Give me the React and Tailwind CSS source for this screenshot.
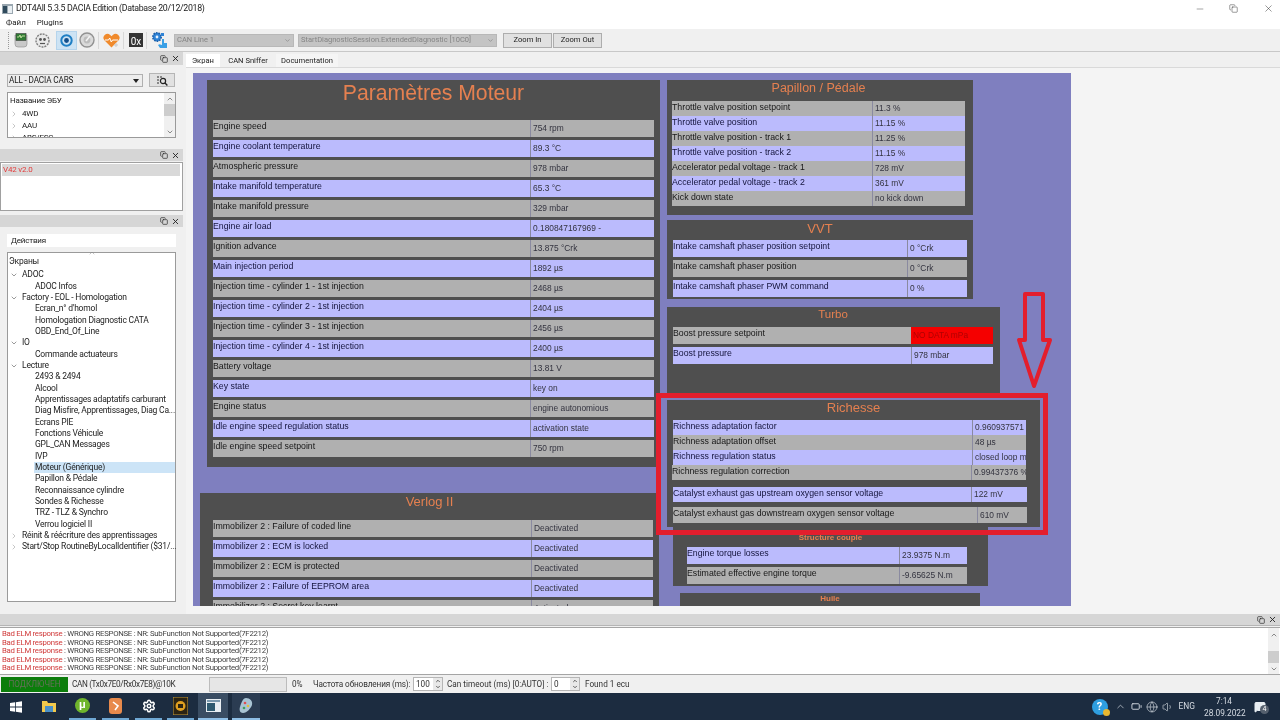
import React from "react";
import { Minus, X, ChevronUp, ChevronDown, ChevronRight, Battery, Globe, Volume1, MessageSquare, Settings, Copy } from "lucide-react";

const UI = "[font-family:'Roboto',sans-serif]";

function Row({ label, value, tone, h = "h-[17px]", valueW = "w-[124px]", mb = "mb-[3px]", valueClass = "" }) {
  const bg = tone === "p" ? "bg-[#bbbbfd] text-[#14143c]" : "bg-[#b0b0b0] text-[#161616]";
  return (
    <div className={`flex ${h} ${mb} ${bg} shrink-0 overflow-hidden`}>
      <div className="flex-1 min-w-0 whitespace-nowrap leading-[12px]">{label}</div>
      <div className={`${valueW} shrink-0 border-l border-[#8a8aa0] pl-[2px] flex items-center whitespace-nowrap overflow-hidden text-[8.4px] text-[#33333f] ${valueClass}`}>{value}</div>
    </div>
  );
}

const mainRows = [
  ["Engine speed", "754 rpm"],
  ["Engine coolant temperature", "89.3 °C"],
  ["Atmospheric pressure", "978 mbar"],
  ["Intake manifold temperature", "65.3 °C"],
  ["Intake manifold pressure", "329 mbar"],
  ["Engine air load", "0.180847167969 -"],
  ["Ignition advance", "13.875 °Crk"],
  ["Main injection period", "1892 µs"],
  ["Injection time - cylinder 1 - 1st injection", "2468 µs"],
  ["Injection time - cylinder 2 - 1st injection", "2404 µs"],
  ["Injection time - cylinder 3 - 1st injection", "2456 µs"],
  ["Injection time - cylinder 4 - 1st injection", "2400 µs"],
  ["Battery voltage", "13.81 V"],
  ["Key state", "key on"],
  ["Engine status", "engine autonomious"],
  ["Idle engine speed regulation status", "activation state"],
  ["Idle engine speed setpoint", "750 rpm"],
];
const verlogRows = [
  ["Immobilizer 2 : Failure of coded line", "Deactivated"],
  ["Immobilizer 2 : ECM is locked", "Deactivated"],
  ["Immobilizer 2 : ECM is protected", "Deactivated"],
  ["Immobilizer 2 : Failure of EEPROM area", "Deactivated"],
  ["Immobilizer 2 : Secret key learnt", "Activated"],
];
const papillonRows = [
  ["Throttle valve position setpoint", "11.3 %"],
  ["Throttle valve position", "11.15 %"],
  ["Throttle valve position - track 1", "11.25 %"],
  ["Throttle valve position - track 2", "11.15 %"],
  ["Accelerator pedal voltage - track 1", "728 mV"],
  ["Accelerator pedal voltage - track 2", "361 mV"],
  ["Kick down state", "no kick down"],
];

const treeRows = [
  [0, "Экраны"],
  [1, "ADOC", "open"],
  [2, "ADOC Infos"],
  [1, "Factory - EOL - Homologation", "open"],
  [2, "Ecran_n° d'homol"],
  [2, "Homologation Diagnostic CATA"],
  [2, "OBD_End_Of_Line"],
  [1, "IO", "open"],
  [2, "Commande actuateurs"],
  [1, "Lecture", "open"],
  [2, "2493 & 2494"],
  [2, "Alcool"],
  [2, "Apprentissages adaptatifs carburant"],
  [2, "Diag Misfire, Apprentissages, Diag Ca..."],
  [2, "Ecrans PIE"],
  [2, "Fonctions Véhicule"],
  [2, "GPL_CAN Messages"],
  [2, "IVP"],
  [2, "Moteur (Générique)", null, true],
  [2, "Papillon & Pédale"],
  [2, "Reconnaissance cylindre"],
  [2, "Sondes & Richesse"],
  [2, "TRZ - TLZ & Synchro"],
  [2, "Verrou logiciel II"],
  [1, "Réinit & réécriture des apprentissages", "closed"],
  [1, "Start/Stop RoutineByLocalIdentifier ($31/...", "closed"],
];

function DockHeader({ className = "" }) {
  return (
    <div className={`h-[12px] bg-[#d6d6d6] flex items-center justify-end gap-[3px] pr-[3px] shrink-0 ${className}`}>
      <Copy size={8} strokeWidth={2} className="text-[#222]" />
      <X size={9} strokeWidth={2.4} className="text-[#222]" />
    </div>
  );
}

function TreeRow({ level, text, state, selected, extra = "" }) {
  const pad = level === 0 ? "pl-[1px]" : level === 1 ? "pl-[14px]" : "pl-[27px]";
  return (
    <div className={`relative h-[11.33px] leading-[11.33px] whitespace-nowrap text-[8.5px] tracking-[-0.2px] text-[#222] ${pad} ${extra}`}>
      {state === "open" && <ChevronDown size={8} strokeWidth={2} className="absolute left-[2px] top-[2px] text-[#666]" />}
      {state === "closed" && <ChevronRight size={8} strokeWidth={2} className="absolute left-[2px] top-[2px] text-[#aaa]" />}
      {selected ? <span className="absolute left-[26px] right-0 top-0 bottom-0 bg-[#cce4f7]" /> : null}
      <span className="relative">{text}</span>
    </div>
  );
}

function Sep() {
  return <div className="w-px h-[17px] bg-[#d8d8d8] shrink-0" />;
}

function Combo({ w, text, ml }) {
  return (
    <div className={`${w} ${ml} h-[13px] bg-[#c4c4c4] border border-[#b8b8b8] flex items-center pl-[2px] text-[7.5px] text-[#858585] whitespace-nowrap overflow-hidden relative shrink-0`}>
      <span className="flex-1 overflow-hidden">{text}</span>
      <ChevronDown size={7} strokeWidth={2.5} className="mr-[2px] text-[#8a8a8a] shrink-0" />
    </div>
  );
}

function App() {
  return (
    <div className={`w-[1280px] h-[720px] overflow-hidden flex flex-col bg-[#f0f0f0] blur-[0.3px] ${UI}`}>
      {/* title bar */}
      <div className="h-[17px] bg-white flex items-center shrink-0">
        <svg width="11" height="10" viewBox="0 0 11 10" className="ml-[2px] shrink-0">
          <rect x="0" y="0" width="11" height="10" fill="#9aa7b0" />
          <rect x="1" y="2" width="4" height="7" fill="#2f4a5c" />
          <rect x="6" y="2" width="4" height="7" fill="#e8eef2" />
        </svg>
        <span className="ml-[3px] text-[8.8px] tracking-[-0.32px] text-[#222] whitespace-nowrap">DDT4All 5.3.5 DACIA Edition (Database 20/12/2018)</span>
        <div className="flex-1" />
        <Minus size={10} strokeWidth={1} className="text-[#222] mr-[24px]" />
        <Copy size={9} strokeWidth={1.2} className="text-[#222] mr-[25px]" />
        <X size={11} strokeWidth={1} className="text-[#222] mr-[6px]" />
      </div>

      {/* menu */}
      <div className="h-[12px] bg-white flex items-center text-[8px] text-[#222] shrink-0">
        <span className="ml-[6px]">Файл</span>
        <span className="ml-[11px]">Plugins</span>
      </div>

      {/* toolbar */}
      <div className="h-[23px] flex items-center border-b border-[#c8c8c8] shrink-0 bg-[#f0f0f0]">
        <div className="ml-[8px] w-px h-[17px] border-l border-dotted border-[#999] shrink-0" />
        <svg width="16" height="16" viewBox="0 0 16 16" className="ml-[4px] shrink-0">
          <path d="M2 3h12v9a3 3 0 0 1-3 3H5a3 3 0 0 1-3-3z" fill="#c9c9c9" stroke="#8a8a8a" strokeWidth="0.6" />
          <rect x="3" y="1.5" width="10" height="7" fill="#2f7a33" stroke="#3d3d3d" strokeWidth="0.6" />
          <path d="M4 5h2l1-2 1 3 1-2h3" stroke="#d9f0b0" strokeWidth="0.8" fill="none" />
        </svg>
        <svg width="15" height="15" viewBox="0 0 15 15" className="ml-[6px] shrink-0">
          <circle cx="7.5" cy="7.5" r="6.5" fill="#e9e9e9" stroke="#7d7d7d" strokeWidth="1.4" strokeDasharray="2 1" />
          <circle cx="5.5" cy="6.5" r="1.4" fill="#555" />
          <circle cx="9.5" cy="6.5" r="1.4" fill="#555" />
          <path d="M5 10.5h5" stroke="#555" strokeWidth="1.2" />
        </svg>
        <div className="ml-[6px] w-[21px] h-[19px] bg-[#cde3f4] border border-[#b5d4ec] flex items-center justify-center shrink-0">
          <svg width="13" height="13" viewBox="0 0 13 13">
            <circle cx="6.5" cy="6.5" r="5.2" fill="none" stroke="#1f7fc4" strokeWidth="2" />
            <circle cx="6.5" cy="6.5" r="2.4" fill="#124f8c" />
          </svg>
        </div>
        <svg width="16" height="16" viewBox="0 0 16 16" className="ml-[2px] shrink-0">
          <circle cx="8" cy="8" r="7" fill="#dadada" stroke="#929292" strokeWidth="1.4" />
          <circle cx="8" cy="8" r="3.4" fill="#bdbdbd" />
          <path d="M7 9l4-5" stroke="#f3f3f3" strokeWidth="1.6" />
        </svg>
        <div className="ml-[3px] shrink-0"><Sep /></div>
        <svg width="17" height="15" viewBox="0 0 17 15" className="ml-[4px] shrink-0">
          <path d="M8.5 14.5 1.6 7.6a4 4 0 0 1 5.6-5.7l1.3 1.3 1.3-1.3a4 4 0 0 1 5.6 5.7z" fill="#f08a2c" />
          <path d="M2 7h3.5l1.2-2 1.6 4 1.2-2H15" stroke="#fff" strokeWidth="1" fill="none" />
          <path d="M13 10v4M11 12h4" stroke="#c9c9c9" strokeWidth="1" />
        </svg>
        <div className="ml-[3px] shrink-0"><Sep /></div>
        <div className="ml-[5px] w-[14px] h-[14px] bg-[#333] text-white text-[10px] leading-[18px] text-center overflow-hidden shrink-0">0x</div>
        <div className="ml-[3px] shrink-0"><Sep /></div>
        <svg width="18" height="18" viewBox="0 0 18 18" className="ml-[4px] shrink-0">
          <circle cx="6" cy="6" r="4.2" fill="#2f83d6" stroke="#1d5fa8" strokeWidth="1.6" strokeDasharray="1.6 1" />
          <circle cx="6" cy="6" r="1.4" fill="#e6f2ff" />
          <path d="M11 8h2v4h3v5h-7l-2-3 1.5-.8L11 14z" fill="#3aa0e6" />
          <rect x="10" y="2" width="3" height="3" fill="#2f83d6" />
        </svg>
        <Combo w="w-[120px]" ml="ml-[5px]" text="CAN Line 1" />
        <Combo w="w-[199px]" ml="ml-[4px]" text="StartDiagnosticSession.ExtendedDiagnostic [10C0]" />
        <div className="ml-[6px] w-[49px] h-[15px] bg-[#e1e1e1] border border-[#adadad] text-[7.6px] text-[#222] flex items-center justify-center shrink-0">Zoom In</div>
        <div className="ml-[1px] w-[49px] h-[15px] bg-[#e1e1e1] border border-[#adadad] text-[7.6px] text-[#222] flex items-center justify-center shrink-0">Zoom Out</div>
      </div>

      {/* main */}
      <div className="h-[562px] flex shrink-0">
        {/* left column */}
        <div className="w-[183px] flex flex-col shrink-0">
          <DockHeader className="h-[13px]" />
          <div className="mt-[8px] ml-[7px] flex h-[14px] shrink-0">
            <div className="w-[136px] h-[13px] mt-px bg-[#ededed] border border-[#b0b0b0] flex items-center pl-[1px] text-[8.2px] tracking-[-0.15px] text-[#222]">
              <span className="flex-1">ALL - DACIA CARS</span>
              <svg width="6" height="4" viewBox="0 0 6 4" className="mr-[3px]"><path d="M0 0h6L3 4z" fill="#222" /></svg>
            </div>
            <div className="ml-[6px] w-[26px] h-[14px] bg-[#e1e1e1] border border-[#b5b5b5] flex items-center justify-center">
              <svg width="12" height="11" viewBox="0 0 12 11">
                <path d="M1 1h2v2H1zM4 1h2v2H4zM1 4h2v2H1zM1 7h2v2H1z" fill="#888" />
                <circle cx="7" cy="6" r="2.6" fill="none" stroke="#222" strokeWidth="1.2" />
                <path d="M9 8l2.4 2.4" stroke="#222" strokeWidth="1.4" />
              </svg>
            </div>
          </div>
          <div className="mt-[5px] ml-[7px] w-[169px] h-[46px] bg-white border border-[#9a9a9a] flex overflow-hidden shrink-0 text-[8px] tracking-[-0.2px] text-[#222]">
            <div className="flex-1 min-w-0">
              <div className="h-[13px] leading-[16px] pl-[2px]">Название ЭБУ</div>
              {["4WD", "AAU", "ABS/ESC"].map((t) => (
                <div key={t} className="relative h-[12px] leading-[16px] pl-[14px]">
                  <ChevronRight size={8} strokeWidth={2} className="absolute left-[2px] top-[4px] text-[#aaa]" />
                  {t}
                </div>
              ))}
            </div>
            <div className="w-[11px] shrink-0 bg-[#f0f0f0] flex flex-col items-center">
              <ChevronUp size={8} strokeWidth={2} className="mt-[2px] text-[#555]" />
              <div className="w-full h-[12px] mt-[1px] bg-[#cdcdcd]" />
              <div className="flex-1" />
              <ChevronDown size={8} strokeWidth={2} className="mb-[1px] text-[#555]" />
            </div>
          </div>
          <DockHeader className="mt-[11px]" />
          <div className="mt-px h-[49px] bg-white border border-[#a0a0a0] pt-px px-px shrink-0">
            <div className="h-[12px] w-[178px] bg-[#d9d9d9] text-[8px] tracking-[-0.2px] leading-[12px] text-[#e23b3b] pl-[1px]">V42 v2.0</div>
          </div>
          <DockHeader className="mt-[4px]" />
          <div className="mt-[7px] ml-[7px] w-[169px] h-[13px] bg-white text-[8px] tracking-[-0.2px] leading-[13px] text-[#222] pl-[4px] shrink-0">Действия</div>
          <div className="relative mt-[5px] ml-[7px] w-[169px] h-[350px] bg-white border border-[#9a9a9a] pt-[3px] shrink-0">
            <ChevronUp size={8} strokeWidth={1.5} className="absolute left-[80px] -top-[4px] text-[#888]" />
            {treeRows.map((r, i) => (
              <TreeRow key={i} level={r[0]} text={r[1]} state={r[2]} selected={r[3]} extra={i === 0 ? "mb-[2px]" : ""} />
            ))}
          </div>
        </div>

        {/* right column */}
        <div className="flex-1 min-w-0 flex flex-col ml-[3px]">
          <div className="h-[16px] flex items-end text-[7.6px] text-[#222] shrink-0 border-b border-[#d9d9d9]">
            <div className="w-[34px] h-[13px] bg-white flex items-center justify-center">Экран</div>
            <div className="w-[54px] ml-px h-[13px] flex items-center justify-center">CAN Sniffer</div>
            <div className="w-[62px] h-[13px] ml-px flex items-center justify-center bg-[#f5f5f5]">Documentation</div>
          </div>
          <div className="flex-1 min-h-0 pl-[7px] pt-[5px] pb-[8px] bg-[#f4f4f4]">
            {/* the ECU screen is a free canvas: its widgets are placed by coordinates */}
            <div className="relative w-[878px] h-full bg-[#7f7fbf] overflow-hidden [font-family:'Liberation_Sans',sans-serif] text-[8.75px]">
              <div className="absolute left-[14px] top-[7px] w-[453px] h-[387px] bg-[#4f4f4f] px-[6px]">
                <div className="h-[40px] pt-[1px] text-center text-[21.2px] leading-[24px] text-[#e58050]">Paramètres Moteur</div>
                {mainRows.map((r, i) => (
                  <Row key={r[0]} label={r[0]} value={r[1]} tone={i % 2 ? "p" : "g"} />
                ))}
              </div>

              <div className="absolute left-[7px] top-[420px] w-[459px] h-[140px] bg-[#4f4f4f] pl-[13px] pr-[6px]">
                <div className="h-[27px] pt-[1px] pr-[7px] text-center text-[13px] leading-[15px] text-[#e58050]">Verlog II</div>
                {verlogRows.map((r, i) => (
                  <Row key={r[0]} label={r[0]} value={r[1]} tone={i % 2 ? "p" : "g"} valueW="w-[122px]" />
                ))}
              </div>

              <div className="absolute left-[474px] top-[7px] w-[306px] h-[135px] bg-[#4f4f4f] pl-[5px] pr-[8px]">
                <div className="h-[21px] pt-[1px] text-center text-[12.5px] leading-[14px] text-[#e58050]">Papillon / Pédale</div>
                {papillonRows.map((r, i) => (
                  <Row key={r[0]} label={r[0]} value={r[1]} tone={i % 2 ? "p" : "g"} h="h-[15px]" mb="mb-0" valueW="w-[93px]" />
                ))}
              </div>

              <div className="absolute left-[474px] top-[147px] w-[306px] h-[79px] bg-[#4f4f4f] pl-[6px] pr-[6px]">
                <div className="h-[20px] pt-[1px] text-center text-[13px] leading-[15px] text-[#e58050]">VVT</div>
                <Row label="Intake camshaft phaser position setpoint" value="0 °Crk" tone="p" valueW="w-[60px]" />
                <Row label="Intake camshaft phaser position" value="0 °Crk" tone="g" valueW="w-[60px]" />
                <Row label="Intake camshaft phaser PWM command" value="0 %" tone="p" valueW="w-[60px]" />
              </div>

              <div className="absolute left-[474px] top-[234px] w-[333px] h-[90px] bg-[#4f4f4f] pl-[6px] pr-[7px]">
                <div className="h-[20px] text-center text-[11.5px] leading-[14px] text-[#e58050]">Turbo</div>
                <Row label="Boost pressure setpoint" value="NO DATA mPa" tone="g" valueW="w-[82px]" valueClass="bg-[#f50000] !text-[#b00000] border-l-0" />
                <Row label="Boost pressure" value="978 mbar" tone="p" valueW="w-[82px]" />
              </div>

              <div className="absolute left-[480px] top-[450px] w-[315px] h-[63px] bg-[#4f4f4f] pl-[14px] pr-[21px] pt-[10px]">
                <div className="h-[14px] -ml-[14px] -mr-[21px] text-center text-[8px] font-bold leading-[10px] text-[#e58050]">Structure couple</div>
                <Row label="Engine torque losses" value="23.9375 N.m" tone="p" valueW="w-[68px]" />
                <Row label="Estimated effective engine torque" value="-9.65625 N.m" tone="g" valueW="w-[68px]" />
              </div>

              <div className="absolute left-[487px] top-[520px] w-[300px] h-[30px] bg-[#4f4f4f] text-center text-[8px] font-bold leading-[10px] pt-[1px] text-[#e58050]">Huile</div>

              <div className="absolute left-[474px] top-[327px] w-[373px] h-[127px] bg-[#4f4f4f]">
                <div className="h-[20px] pt-px text-center text-[13px] leading-[14px] text-[#e58050]">Richesse</div>
                <div className="ml-[6px] w-[353px]">
                  <Row label="Richness adaptation factor" value="0.960937571" tone="p" h="h-[15px]" mb="mb-0" valueW="w-[54px]" />
                  <Row label="Richness adaptation offset" value="48 µs" tone="g" h="h-[15px]" mb="mb-0" valueW="w-[54px]" />
                  <Row label="Richness regulation status" value="closed loop mode" tone="p" h="h-[15px]" mb="mb-0" valueW="w-[54px]" />
                  <div className="-ml-px">
                    <Row label="Richness regulation correction" value="0.99437376 %" tone="g" h="h-[15px]" mb="mb-[7px]" valueW="w-[55px]" />
                  </div>
                  <div className="w-[354px]">
                    <Row label="Catalyst exhaust gas upstream oxygen sensor voltage" value="122 mV" tone="p" h="h-[15px]" mb="mb-[5px]" valueW="w-[56px]" />
                    <Row label="Catalyst exhaust gas downstream oxygen sensor voltage" value="610 mV" tone="g" h="h-[16px]" mb="mb-0" valueW="w-[50px]" />
                  </div>
                </div>
              </div>

              <div className="absolute left-[463px] top-[320px] w-[392px] h-[142px] border-[5px] border-[#e31e2d]" />

              <svg width="38" height="100" viewBox="0 0 38 100" className="absolute left-[823px] top-[217px]">
                <path d="M9 4 H27 V50 H34 L18 96 L3 50 H9 Z" fill="none" stroke="#e31e2d" strokeWidth="4" strokeLinejoin="round" />
              </svg>
            </div>
          </div>
        </div>
      </div>

      {/* bottom dock */}
      <DockHeader className="h-[12px] border-b border-[#b5b5b5]" />
      <div className="h-[48px] mt-px bg-white border-y border-[#a5a5a5] flex shrink-0">
        <div className="flex-1 pt-[2px] pl-[2px] text-[7.8px] tracking-[-0.28px] leading-[8.6px] text-[#444] whitespace-nowrap">
          {[0, 1, 2, 3, 4].map((i) => (
            <div key={i}><span className="text-[#d03a3a]">Bad ELM response</span> : WRONG RESPONSE : NR: SubFunction Not Supported(7F2212)</div>
          ))}
        </div>
        <div className="w-[11px] mr-[1px] bg-[#f0f0f0] flex flex-col items-center shrink-0">
          <ChevronUp size={8} strokeWidth={2} className="mt-[3px] text-[#555]" />
          <div className="w-full h-[12px] mt-[12px] bg-[#cdcdcd]" />
          <div className="flex-1" />
          <ChevronDown size={8} strokeWidth={2} className="mb-[1px] text-[#555]" />
        </div>
      </div>

      {/* status bar */}
      <div className="h-[18px] flex items-center text-[8.2px] text-[#333] whitespace-nowrap shrink-0">
        <div className="ml-[1px] w-[67px] h-[15px] bg-[#0b7d0b] text-[#66705a] flex items-center justify-center">ПОДКЛЮЧЕН</div>
        <span className="ml-[4px] w-[137px] shrink-0 tracking-[-0.35px]">CAN (Tx0x7E0/Rx0x7E8)@10K</span>
        <div className="w-[78px] h-[15px] bg-[#e6e6e6] border border-[#bcbcbc] shrink-0" />
        <span className="ml-[5px] w-[21px] shrink-0">0%</span>
        <span className="w-[100px] shrink-0 tracking-[-0.12px]">Частота обновления (ms):</span>
        <div className="w-[30px] h-[14px] bg-white border border-[#b5b5b5] flex items-center pl-[2px] shrink-0">
          <span className="flex-1">100</span>
          <div className="w-[9px] h-full bg-[#e8e8e8] flex flex-col items-center justify-center">
            <ChevronUp size={6} strokeWidth={3} className="text-[#333]" />
            <ChevronDown size={6} strokeWidth={3} className="text-[#333]" />
          </div>
        </div>
        <span className="ml-[4px] w-[104px] shrink-0">Can timeout (ms) [0:AUTO] :</span>
        <div className="w-[29px] h-[14px] bg-white border border-[#b5b5b5] flex items-center pl-[2px] shrink-0">
          <span className="flex-1">0</span>
          <div className="w-[9px] h-full bg-[#e8e8e8] flex flex-col items-center justify-center">
            <ChevronUp size={6} strokeWidth={3} className="text-[#333]" />
            <ChevronDown size={6} strokeWidth={3} className="text-[#333]" />
          </div>
        </div>
        <span className="ml-[5px]">Found 1 ecu</span>
      </div>

      {/* taskbar */}
      <div className="flex-1 min-h-0 bg-[#1c2c40] flex items-center text-[#d5dbe2]">
        <svg width="12" height="12" viewBox="0 0 12 12" className="ml-[10px] shrink-0">
          <path d="M0 2l5-.7V5.6H0zM5.8 1.2 12 .3v5.3H5.8zM0 6.4h5v4.3L0 10zM5.8 6.4H12v5.3l-6.2-.9z" fill="#fff" />
        </svg>
        <div className="ml-[13px] w-[28px] h-full flex items-center justify-center border-b-2 border-transparent shrink-0">
          <svg width="14" height="12" viewBox="0 0 14 12"><path d="M0 1h5l1 2h8v9H0z" fill="#f2c94c" /><rect x="3" y="6" width="8" height="6" fill="#4a90c8" /></svg>
        </div>
        <div className="ml-[6px] w-[27px] h-full flex items-center justify-center border-b-2 border-[#6fa8d4] shrink-0">
          <div className="w-[15px] h-[15px] rounded-full bg-[#6fb52c] text-white text-[11px] font-bold leading-[14px] text-center">µ</div>
        </div>
        <div className="ml-[6px] w-[27px] h-full flex items-center justify-center border-b-2 border-[#6fa8d4] shrink-0">
          <svg width="13" height="16" viewBox="0 0 13 16"><rect width="13" height="16" rx="3" fill="#e88a4c" /><path d="M4 4l5 4-3 4" stroke="#fff" strokeWidth="1.6" fill="none" /></svg>
        </div>
        <div className="ml-[6px] w-[27px] h-full flex items-center justify-center border-b-2 border-[#6fa8d4] shrink-0">
          <Settings size={14} strokeWidth={2.6} className="text-white" />
        </div>
        <div className="ml-[5px] w-[27px] h-full flex items-center justify-center border-b-2 border-[#6fa8d4] shrink-0">
          <svg width="15" height="18" viewBox="0 0 15 18"><rect width="15" height="18" fill="#2c2413" stroke="#c49a3a" /><circle cx="7.5" cy="9" r="5" fill="#e0a020" /><rect x="5" y="7" width="5" height="4" fill="#2c2413" /></svg>
        </div>
        <div className="ml-[4px] w-[30px] h-full bg-[#3a4d63] flex items-center justify-center border-b-2 border-[#8fbfe6] shrink-0">
          <svg width="15" height="13" viewBox="0 0 15 13"><rect width="15" height="13" fill="#e8eef2" /><rect x="1" y="1" width="13" height="2" fill="#7a98ad" /><rect x="1" y="4" width="8" height="8" fill="#2f5a70" /></svg>
        </div>
        <div className="ml-[4px] w-[28px] h-full bg-[#2b3c52] flex items-center justify-center border-b-2 border-[#8fbfe6] shrink-0">
          <svg width="15" height="17" viewBox="0 0 15 17"><path d="M7 1c4 0 7 3 6 7-1 3-5 8-9 8-3 0-4-3-3-6 1-4 3-9 6-9z" fill="#a9c4d4" /><circle cx="6" cy="6" r="1.3" fill="#e05050" /><circle cx="9" cy="9" r="1.3" fill="#e0c040" /><circle cx="5" cy="11" r="1.3" fill="#40a060" /></svg>
        </div>
        <div className="flex-1" />
        <div className="relative w-[16px] h-[16px] rounded-full bg-[#2f9fe0] text-white text-[11px] font-bold leading-[16px] text-center shrink-0">?<span className="absolute right-[-2px] bottom-[-1px] w-[7px] h-[7px] rounded-full bg-[#e8b830]" /></div>
        <ChevronUp size={11} strokeWidth={1.5} className="ml-[7px] shrink-0" />
        <Battery size={11} strokeWidth={2} className="ml-[5px] shrink-0" />
        <Globe size={12} strokeWidth={1.3} className="ml-[4px] shrink-0" />
        <Volume1 size={12} strokeWidth={1.3} className="ml-[4px] shrink-0" />
        <span className="ml-[5px] text-[8.4px] shrink-0">ENG</span>
        <div className="ml-[9px] w-[40px] text-center text-[8.3px] leading-[12px] shrink-0">
          <div>7:14</div>
          <div>28.09.2022</div>
        </div>
        <div className="relative ml-[10px] mr-[14px] shrink-0">
          <MessageSquare size={12} fill="#e8eef2" className="text-[#e8eef2]" />
          <span className="absolute left-[6px] top-[4px] w-[9px] h-[9px] rounded-full bg-[#55606e] text-[7px] leading-[9px] text-center text-white">4</span>
        </div>
      </div>
    </div>
  );
}

export default App;
